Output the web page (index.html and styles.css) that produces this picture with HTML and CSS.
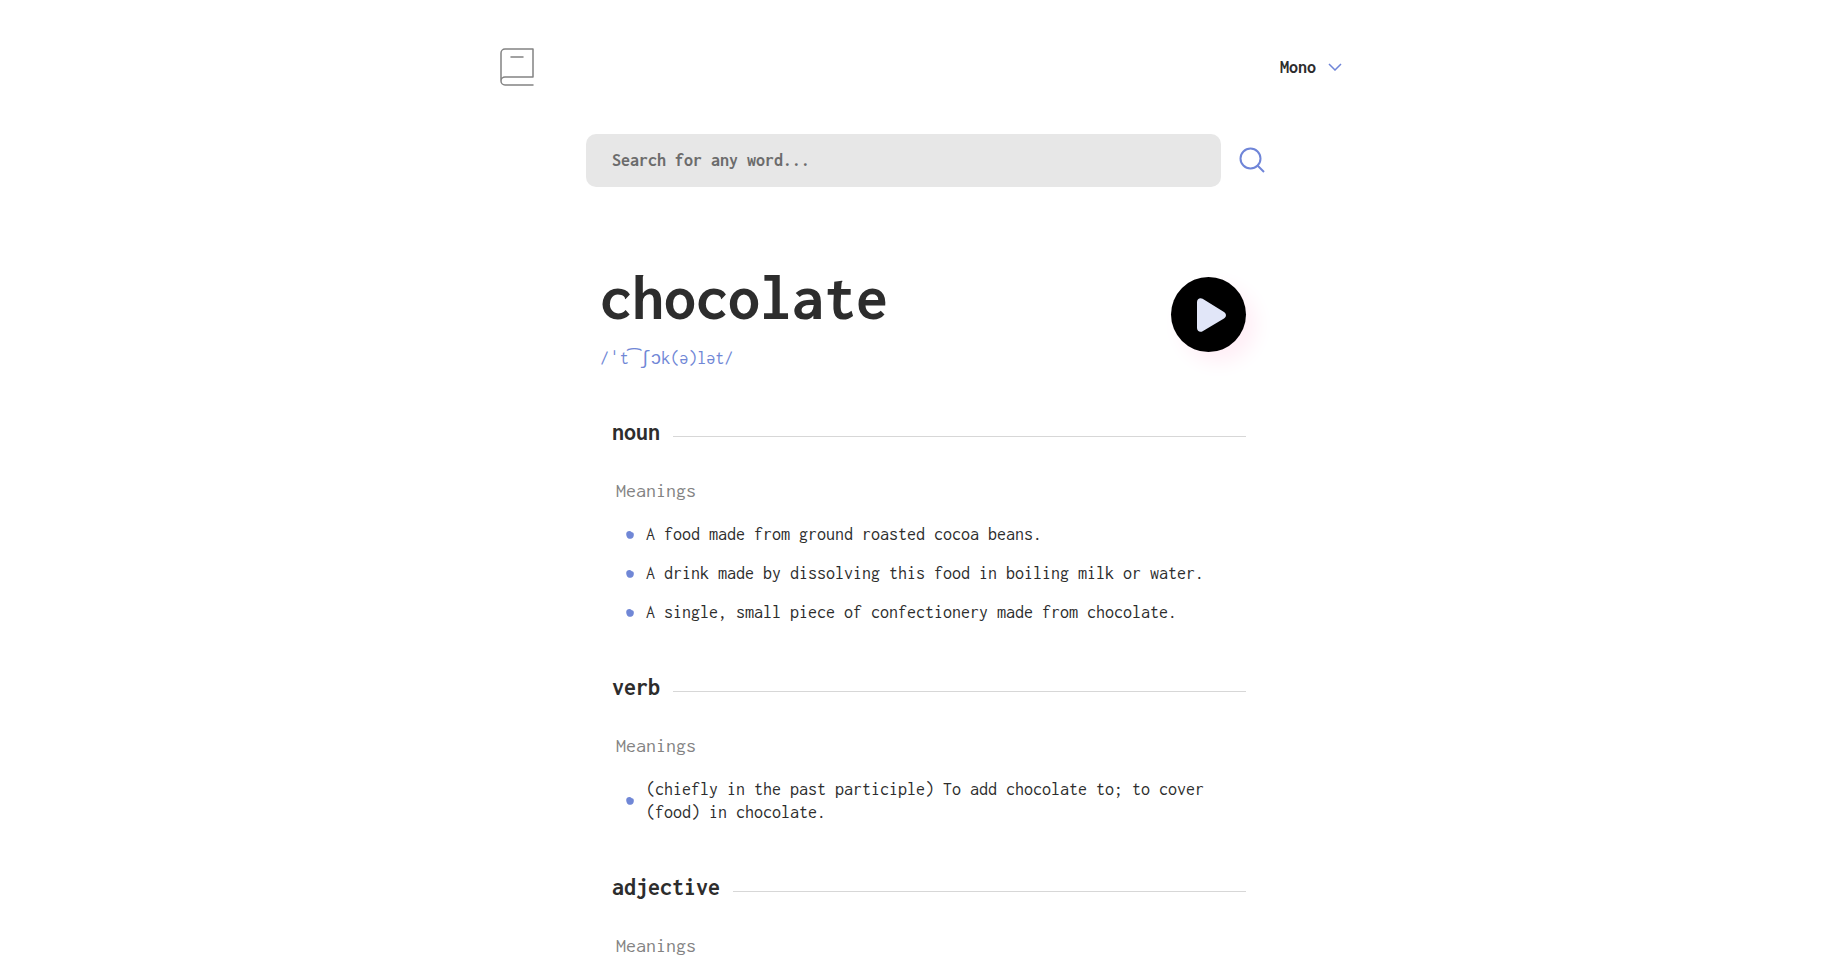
FILE: index.html
```html
<!DOCTYPE html>
<html lang="en">
<head>
<meta charset="utf-8">
<title>Dictionary</title>
<meta name="viewport" content="width=device-width, initial-scale=1">
<link rel="stylesheet" href="styles.css">
</head>
<body>
<svg class="sprite" aria-hidden="true">
  <symbol id="dot" viewBox="0 0 8 8"><path d="M.2 3C.2 1.200 1.600 0 3.400 0 5.500 0 5.200 1.200 6.800 1.500 8 1.800 8.200 4.600 7.200 6.200 6 7.800 3.900 8.300 2.300 7.400.9 6.600.2 4.800 .2 3Z" fill="#7087d6"/></symbol>
</svg>
<header class="header">
  <a class="logo" href="#" aria-label="Dictionary home">
    <svg width="34" height="38" viewBox="0 0 34 38" fill="none" stroke="#838383" stroke-width="1.500" stroke-linecap="round" stroke-linejoin="round"><path d="M33 37H5a4 4 0 0 1 0-8h28V1H5a4 4 0 0 0-4 4v28M11 9h12"/></svg>
  </a>
  <div class="font-picker">
    <select class="font-select" aria-label="Font">
      <option>Mono</option>
      <option>Serif</option>
      <option>Sans</option>
    </select>
    <svg width="14" height="8" viewBox="0 0 14 8" fill="none" stroke="#6f85d8" stroke-width="1.500" aria-hidden="true"><path d="m1 1 6 6 6-6"/></svg>
  </div>
</header>
<main class="main">
  <form class="search">
    <input class="search-input" type="text" aria-label="Search" placeholder="Search for any word...">
    <button class="search-button" type="button" aria-label="Search">
      <svg width="26" height="26" viewBox="0 0 26 26" fill="none" stroke="#6f85d8" stroke-width="2"><circle cx="11.500" cy="11.500" r="10"/><path d="m18.500 18.500 6.500 6.500"/></svg>
    </button>
  </form>
  <div class="entry">
    <div class="word">
      <div>
        <h1 class="title">chocolate</h1>
        <p class="phonetic">/<span class="ipa">ˈ</span>t<span class="ipa">͡ʃ</span>ɔk(ə)lət/</p>
      </div>
      <button class="play" type="button" aria-label="Play pronunciation">
        <svg width="29" height="34" viewBox="0 0 29 34" aria-hidden="true"><path d="M0 4C0 1 3 -.8 5.600.8L27 14C29.600 15.600 29.600 18.800 27 20.400L5.600 33.200C3 34.800 0 33 0 30Z" fill="#e1e6f8"/></svg>
      </button>
    </div>
    <section class="sense">
      <h2 class="part">noun</h2>
      <h3 class="label">Meanings</h3>
      <ul class="meanings">
        <li class="meaning"><svg class="dot"><use href="#dot"/></svg><span>A food made from ground roasted cocoa beans.</span></li>
        <li class="meaning"><svg class="dot"><use href="#dot"/></svg><span>A drink made by dissolving this food in boiling milk or water.</span></li>
        <li class="meaning"><svg class="dot"><use href="#dot"/></svg><span>A single, small piece of confectionery made from chocolate.</span></li>
      </ul>
    </section>
    <section class="sense">
      <h2 class="part">verb</h2>
      <h3 class="label">Meanings</h3>
      <ul class="meanings">
        <li class="meaning"><svg class="dot"><use href="#dot"/></svg><span>(chiefly in the past participle) To add chocolate to; to cover (food) in chocolate.</span></li>
      </ul>
    </section>
    <section class="sense">
      <h2 class="part">adjective</h2>
      <h3 class="label">Meanings</h3>
    </section>
  </div>
</main>
</body>
</html>
```

FILE: styles.css
```css
* { box-sizing: border-box; }
body, h1, h2, h3, p, ul { margin: 0; padding: 0; }
body {
  font-family: Inconsolata, "Noto Sans Mono CJK SC", "Liberation Mono", monospace;
  font-size: 18px;
  line-height: 23px;
  color: #2d2d2d;
  background: #fff;
}
button, input, select { font: inherit; color: inherit; border: 0; background: none; padding: 0; }
button { cursor: pointer; }
svg { display: block; flex: none; }
.sprite { position: absolute; width: 0; height: 0; }
.header {
  max-width: 846px;
  margin: 0 auto;
  padding-top: 48px;
  display: flex;
  justify-content: space-between;
  align-items: center;
}
.font-picker { display: flex; align-items: center; gap: 12px; padding-right: 4px; }
.font-select { appearance: none; font-weight: 700; width: 36px; }
.main { max-width: 678px; margin: 0 auto; padding-top: 48px; }
.search { display: flex; align-items: center; gap: 18px; margin: 0 -3px 0 2px; }
.search-input {
  flex: 1;
  min-width: 0;
  height: 53px;
  padding: 0 26px 2px;
  border-radius: 10px;
  background: #e7e7e7;
  font-weight: 700;
}
.search-input::placeholder { color: #6c6c6c; opacity: 1; }
.search-button { padding-bottom: 2px; }
.entry { padding: 72px 16px 0; }
.word { display: flex; justify-content: space-between; align-items: center; }
.title { font-size: 64px; line-height: 77px; font-weight: 700; }
.phonetic { color: #7087d6; margin-top: 10px; }
.ipa { font-family: "DejaVu Sans Mono", monospace; }
.play {
  width: 75px;
  height: 75px;
  border-radius: 50%;
  background: #000;
  display: flex;
  align-items: center;
  justify-content: center;
  padding-left: 6px;
  box-shadow: 10px 10px 20px #ffeef6;
}
.sense { padding-left: 12px; margin-top: 48px; }
.part { display: flex; align-items: center; gap: 13px; font-size: 24px; line-height: 28px; font-weight: 700; }
.part::after { content: ""; flex: 1; height: 1px; margin-top: 8px; background: #d7d7d7; }
.label { margin: 32px 0 0 4px; font-size: 20px; line-height: 26px; font-weight: 400; color: #838383; }
.meanings { list-style: none; margin: 19px 0 0 14px; padding-bottom: 1px; display: grid; gap: 16px; }
.meaning { display: flex; align-items: center; gap: 12px; }
.dot { width: 8px; height: 8px; }
```
